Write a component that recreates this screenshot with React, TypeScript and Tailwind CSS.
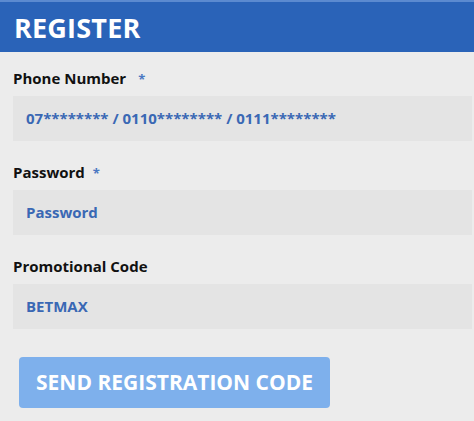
import React from "react";

const fields = [
  { label: "Phone Number", required: true, gap: "ml-3", value: "07******** / 0110******** / 0111********" },
  { label: "Password", required: true, gap: "ml-2", value: "Password" },
  { label: "Promotional Code", required: false, gap: "", value: "BETMAX" },
];

export default function App() {
  return (
    <div className="w-[474px] h-[421px] bg-[#ececec] overflow-hidden" style={{ fontFamily: '"Open Sans", sans-serif' }}>
      <div className="h-[52px] bg-[#2a63b8] border-t-2 border-[#5b8ad0] flex items-center px-[14px]">
        <h1 className="text-[27px] font-bold text-white leading-none tracking-[0.2px]">REGISTER</h1>
      </div>
      <div className="pl-[13px] pr-[2px] pt-[15px]">
        {fields.map((f) => (
          <div key={f.label} className="mb-[20px]">
            <div className="h-[22px] flex items-center text-[15px] font-bold text-[#111] mb-[7px]">
              {f.label}
              {f.required && <span className={`${f.gap} text-[#4a78c2] text-[13px] mt-[4px]`}>*</span>}
            </div>
            <div className="h-[45px] bg-[#e4e4e4] flex items-center px-[13px] text-[15px] font-bold text-[#3a68b4]">
              {f.value}
            </div>
          </div>
        ))}
        <button className="mt-[8px] ml-[6px] w-[311px] h-[51px] rounded-[4px] bg-[#7eb0ec] text-white text-[21px] font-bold">
          SEND REGISTRATION CODE
        </button>
      </div>
    </div>
  );
}
